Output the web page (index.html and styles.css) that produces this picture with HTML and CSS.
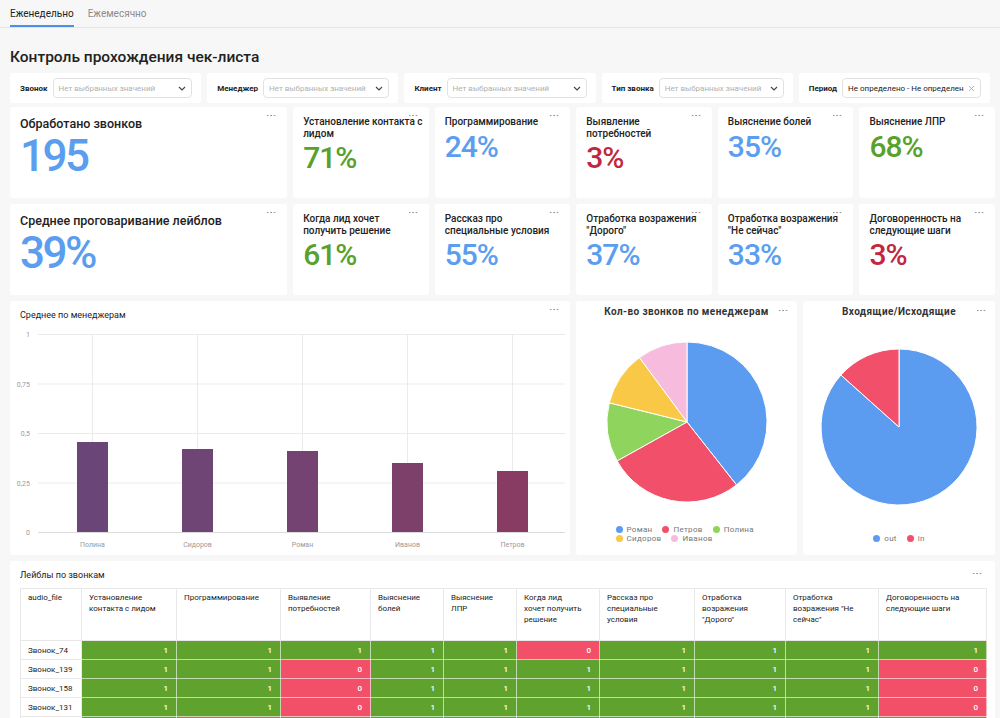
FILE: index.html
```html
<!DOCTYPE html>
<html>
  <head>
    <meta charset="utf-8">
    <title>Контроль прохождения чек-листа</title>
    <link rel="stylesheet" href="styles.css">
  </head>
  <body>
    <div class="tabs">
      <span class="tab tab-active">Еженедельно</span>
      <span class="tab">Ежемесячно</span>
    </div>

    <div class="page">
      <p class="page-title">Контроль прохождения чек-листа</p>

      <div class="filters">
        <div class="filter">
          <span class="filter-label">Звонок</span>
          <div class="select">
            <span class="placeholder">Нет выбранных значений</span>
            <svg class="chevron" width="8" height="5" viewBox="0 0 8 5"><path d="M1 1l3 3 3-3" fill="none" stroke="#444" stroke-width="1.1"/></svg>
          </div>
        </div>
        <div class="filter">
          <span class="filter-label">Менеджер</span>
          <div class="select">
            <span class="placeholder">Нет выбранных значений</span>
            <svg class="chevron" width="8" height="5" viewBox="0 0 8 5"><path d="M1 1l3 3 3-3" fill="none" stroke="#444" stroke-width="1.1"/></svg>
          </div>
        </div>
        <div class="filter">
          <span class="filter-label">Клиент</span>
          <div class="select">
            <span class="placeholder">Нет выбранных значений</span>
            <svg class="chevron" width="8" height="5" viewBox="0 0 8 5"><path d="M1 1l3 3 3-3" fill="none" stroke="#444" stroke-width="1.1"/></svg>
          </div>
        </div>
        <div class="filter">
          <span class="filter-label">Тип звонка</span>
          <div class="select">
            <span class="placeholder">Нет выбранных значений</span>
            <svg class="chevron" width="8" height="5" viewBox="0 0 8 5"><path d="M1 1l3 3 3-3" fill="none" stroke="#444" stroke-width="1.1"/></svg>
          </div>
        </div>
        <div class="filter">
          <span class="filter-label">Период</span>
          <div class="select">
            <span class="select-value">Не определено - Не определен</span>
            <svg class="clear" width="7" height="7" viewBox="0 0 7 7"><path d="M1 1l5 5M6 1l-5 5" stroke="#aaa" stroke-width="0.9"/></svg>
          </div>
        </div>
      </div>

      <div class="kpi-grid">
        <div class="card kpi kpi-wide">
          <span class="dots"></span>
          <p class="kpi-title-big">Обработано звонков</p>
          <p class="kpi-value-big blue">195</p>
        </div>
        <div class="card kpi">
          <span class="dots"></span>
          <p class="kpi-title">Установление контакта с лидом</p>
          <p class="kpi-value green">71%</p>
        </div>
        <div class="card kpi">
          <span class="dots"></span>
          <p class="kpi-title">Программирование</p>
          <p class="kpi-value blue">24%</p>
        </div>
        <div class="card kpi">
          <span class="dots"></span>
          <p class="kpi-title">Выявление потребностей</p>
          <p class="kpi-value red">3%</p>
        </div>
        <div class="card kpi">
          <span class="dots"></span>
          <p class="kpi-title">Выяснение болей</p>
          <p class="kpi-value blue">35%</p>
        </div>
        <div class="card kpi">
          <span class="dots"></span>
          <p class="kpi-title">Выяснение ЛПР</p>
          <p class="kpi-value green">68%</p>
        </div>

        <div class="card kpi kpi-wide">
          <span class="dots"></span>
          <p class="kpi-title-big">Среднее проговаривание лейблов</p>
          <p class="kpi-value-big blue">39%</p>
        </div>
        <div class="card kpi">
          <span class="dots"></span>
          <p class="kpi-title">Когда лид хочет получить решение</p>
          <p class="kpi-value green">61%</p>
        </div>
        <div class="card kpi">
          <span class="dots"></span>
          <p class="kpi-title">Рассказ про специальные условия</p>
          <p class="kpi-value blue">55%</p>
        </div>
        <div class="card kpi">
          <span class="dots"></span>
          <p class="kpi-title">Отработка возражения "Дорого"</p>
          <p class="kpi-value blue">37%</p>
        </div>
        <div class="card kpi">
          <span class="dots"></span>
          <p class="kpi-title">Отработка возражения "Не сейчас"</p>
          <p class="kpi-value blue">33%</p>
        </div>
        <div class="card kpi">
          <span class="dots"></span>
          <p class="kpi-title">Договоренность на следующие шаги</p>
          <p class="kpi-value red">3%</p>
        </div>
      </div>

      <div class="charts">
        <div class="card chart-card">
          <span class="dots"></span>
          <p class="chart-title">Среднее по менеджерам</p>
          <svg class="bar-chart" width="560" height="228" viewBox="0 0 560 228">
            <g stroke="#ebebeb" stroke-width="1">
              <line x1="28" y1="7.5" x2="555" y2="7.5"/>
              <line x1="28" y1="57" x2="555" y2="57"/>
              <line x1="28" y1="106.5" x2="555" y2="106.5"/>
              <line x1="28" y1="156" x2="555" y2="156"/>
              <line x1="82.5" y1="7" x2="82.5" y2="205"/>
              <line x1="187.5" y1="7" x2="187.5" y2="205"/>
              <line x1="292.5" y1="7" x2="292.5" y2="205"/>
              <line x1="397.5" y1="7" x2="397.5" y2="205"/>
              <line x1="502.5" y1="7" x2="502.5" y2="205"/>
            </g>
            <rect x="67" y="115" width="31" height="90" fill="#6a4678"/>
            <rect x="172" y="122" width="31" height="83" fill="#6e4575"/>
            <rect x="277" y="124" width="31" height="81" fill="#744371"/>
            <rect x="382" y="136" width="31" height="69" fill="#7d406a"/>
            <rect x="487" y="144" width="31" height="61" fill="#883c63"/>
            <line x1="28" y1="205.5" x2="555" y2="205.5" stroke="#dcdcdc"/>
            <g class="axis-text" text-anchor="end">
              <text x="20" y="10">1</text>
              <text x="20" y="59.5">0,75</text>
              <text x="20" y="109">0,5</text>
              <text x="20" y="158.5">0,25</text>
              <text x="20" y="208">0</text>
            </g>
            <g class="axis-text" text-anchor="middle">
              <text x="82.5" y="220">Полина</text>
              <text x="187.5" y="220">Сидоров</text>
              <text x="292.5" y="220">Роман</text>
              <text x="397.5" y="220">Иванов</text>
              <text x="502.5" y="220">Петров</text>
            </g>
          </svg>
        </div>

        <div class="card pie-card">
          <span class="dots"></span>
          <p class="pie-title">Кол-во звонков по менеджерам</p>
          <div class="pie-area">
            <svg width="162" height="162" viewBox="-81 -81 162 162">
              <g stroke="#fff" stroke-width="1" stroke-linejoin="round">
                <path d="M0,0 L0,-80 A80,80 0 0 1 49.5,62.9 Z" fill="#5b9cf0"/>
                <path d="M0,0 L49.5,62.9 A80,80 0 0 1 -69.9,38.9 Z" fill="#f2506a"/>
                <path d="M0,0 L-69.9,38.9 A80,80 0 0 1 -77.7,-19.2 Z" fill="#8fd45c"/>
                <path d="M0,0 L-77.7,-19.2 A80,80 0 0 1 -47.5,-64.4 Z" fill="#f9c846"/>
                <path d="M0,0 L-47.5,-64.4 A80,80 0 0 1 0,-80 Z" fill="#f7bbdd"/>
              </g>
            </svg>
          </div>
          <div class="legend legend-wrap">
            <span class="legend-item"><i class="dot" style="background: #5b9cf0;"></i>Роман</span>
            <span class="legend-item"><i class="dot" style="background: #f2506a;"></i>Петров</span>
            <span class="legend-item"><i class="dot" style="background: #8fd45c;"></i>Полина</span>
            <span class="legend-item"><i class="dot" style="background: #f9c846;"></i>Сидоров</span>
            <span class="legend-item"><i class="dot" style="background: #f7bbdd;"></i>Иванов</span>
          </div>
        </div>

        <div class="card pie-card">
          <span class="dots"></span>
          <p class="pie-title">Входящие/Исходящие</p>
          <div class="pie-area">
            <svg width="158" height="158" viewBox="-79 -79 158 158">
              <g stroke="#fff" stroke-width="1" stroke-linejoin="round">
                <path d="M0,0 L0,-78 A78,78 0 1 1 -58.1,-52 Z" fill="#5b9cf0"/>
                <path d="M0,0 L-58.1,-52 A78,78 0 0 1 0,-78 Z" fill="#f2506a"/>
              </g>
            </svg>
          </div>
          <div class="legend">
            <span class="legend-item"><i class="dot" style="background: #5b9cf0;"></i>out</span>
            <span class="legend-item"><i class="dot" style="background: #f2506a;"></i>in</span>
          </div>
        </div>
      </div>

      <div class="card table-card">
        <span class="dots"></span>
        <p class="table-title">Лейблы по звонкам</p>
        <table class="labels-table">
          <colgroup>
            <col style="width: 61px;">
            <col style="width: 95px;">
            <col style="width: 104px;">
            <col style="width: 90px;">
            <col style="width: 73px;">
            <col style="width: 73px;">
            <col style="width: 83px;">
            <col style="width: 95px;">
            <col style="width: 91px;">
            <col style="width: 93px;">
            <col style="width: 108px;">
          </colgroup>
          <thead>
            <tr>
              <th>audio_file</th>
              <th>Установление контакта с лидом</th>
              <th>Программирование</th>
              <th>Выявление потребностей</th>
              <th>Выяснение болей</th>
              <th>Выяснение ЛПР</th>
              <th>Когда лид хочет получить решение</th>
              <th>Рассказ про специальные условия</th>
              <th>Отработка возражения "Дорого"</th>
              <th>Отработка возражения "Не сейчас"</th>
              <th>Договоренность на следующие шаги</th>
            </tr>
          </thead>
          <tbody class="js-rows"></tbody>
        </table>
      </div>
    </div>

    <script>
      const rows = [
        ['Звонок_74', [1, 1, 1, 1, 1, 0, 1, 1, 1, 1]],
        ['Звонок_139', [1, 1, 0, 1, 1, 1, 1, 1, 1, 0]],
        ['Звонок_158', [1, 1, 0, 1, 1, 1, 1, 1, 1, 0]],
        ['Звонок_131', [1, 1, 0, 1, 1, 1, 1, 1, 1, 0]],
        ['', [1, 0, 1, 1, 1, 1, 1, 1, 1, 1]]
      ];

      let rowsHTML = '';

      rows.forEach((row) => {
        let cells = `<td class="name-cell">${row[0]}</td>`;
        row[1].forEach((value) => {
          const cellClass = value === 1 ? 'cell-yes' : 'cell-no';
          // the last row is only a sliver at the bottom edge
          const text = row[0] ? value : '';
          cells += `<td class="${cellClass}">${text}</td>`;
        });
        rowsHTML += `<tr>${cells}</tr>`;
      });

      document.querySelector('.js-rows').innerHTML = rowsHTML;
    </script>
  </body>
</html>
```

FILE: styles.css
```css
body {
  margin: 0;
  background-color: #f7f7f7;
  color: #222;
  font-family: Roboto, "Noto Sans", sans-serif;
}

p {
  margin: 0;
}

.tabs {
  display: flex;
  gap: 14px;
  height: 27px;
  padding-left: 10px;
  border-bottom: 1px solid #e4e4e4;
}

.tab {
  font-size: 10px;
  line-height: 27px;
  color: #8c8c8c;
}

.tab-active {
  color: #222;
  box-shadow: inset 0 -2px 0 #4d8ee8;
}

.page {
  padding: 0 5px 0 10px;
}

.page-title {
  font-size: 15.5px;
  font-weight: 500;
  line-height: 20px;
  margin-top: 19px;
  margin-bottom: 6px;
}

.filters {
  display: flex;
  gap: 6px;
  margin-bottom: 4px;
  margin-right: 5px;
}

.filter {
  flex: 1;
  display: flex;
  align-items: center;
  height: 30px;
  padding: 0 9px 0 10px;
  background-color: white;
  border-radius: 3px;
}

.filter-label {
  font-size: 8px;
  font-weight: 700;
  margin-right: 5px;
  white-space: nowrap;
}

.select {
  flex: 1;
  display: flex;
  align-items: center;
  height: 18px;
  padding: 0 5px;
  border: 1px solid #e2e2e2;
  border-radius: 4px;
  font-size: 8px;
  overflow: hidden;
  white-space: nowrap;
}

.placeholder {
  flex: 1;
  color: #b0b0b0;
}

.select-value {
  flex: 1;
  overflow: hidden;
  color: #222;
}

.chevron {
  margin-left: 4px;
}

.clear {
  margin-left: 4px;
  flex-shrink: 0;
}

.card {
  position: relative;
  background-color: white;
  border-radius: 3px;
}

.dots {
  position: absolute;
  top: 7px;
  right: 11px;
  width: 10px;
  height: 3px;
  background-image: radial-gradient(circle, #9a9a9a 0.7px, transparent 1.1px);
  background-size: 3.4px 3px;
}

.kpi-grid {
  display: grid;
  grid-template-columns: repeat(7, 1fr);
  grid-auto-rows: 91px;
  gap: 6px;
}

.kpi {
  padding: 9px 5px 9px 10px;
}

.kpi-wide {
  grid-column: span 2;
  padding-top: 9px;
}

.kpi-title-big {
  font-size: 12.5px;
  font-weight: 500;
  line-height: 15px;
}

.kpi-value-big {
  font-size: 44px;
  font-weight: 500;
  line-height: 46px;
  letter-spacing: -2.5px;
  margin-top: 2px;
}

.kpi-title {
  font-size: 10px;
  font-weight: 500;
  line-height: 11.5px;
}

.kpi-value {
  font-size: 30px;
  font-weight: 500;
  line-height: 30px;
  margin-top: 4px;
  letter-spacing: -1px;
}

.blue {
  color: #5b9ef0;
}

.green {
  color: #58a12b;
}

.red {
  color: #c1283f;
}

.charts {
  display: grid;
  grid-template-columns: 560px 221px 1fr;
  gap: 6px;
  margin-top: 6px;
  height: 254px;
}

.chart-card {
  padding-top: 8px;
}

.chart-title {
  font-size: 9px;
  line-height: 12px;
  padding-left: 10px;
  height: 18px;
}

.bar-chart {
  display: block;
}

.axis-text {
  font-size: 7px;
  fill: #9a9a9a;
}

.pie-card {
  display: flex;
  flex-direction: column;
  padding: 4px 0 12px;
}

.pie-card .dots {
  top: 8px;
  right: 9px;
}

.pie-title {
  font-size: 10px;
  font-weight: 700;
  line-height: 14px;
  text-align: center;
  letter-spacing: 0.4px;
  color: #333;
}

.pie-area {
  flex: 1;
  display: flex;
  align-items: center;
  justify-content: center;
}

.legend {
  display: flex;
  justify-content: center;
  gap: 0 10px;
  font-size: 8px;
  line-height: 9px;
  color: #777;
  letter-spacing: 0.3px;
}

.legend-wrap {
  flex-wrap: wrap;
  justify-content: flex-start;
  width: 142px;
  margin: 0 auto;
}

.legend-item {
  display: flex;
  align-items: center;
}

.dot {
  width: 7px;
  height: 7px;
  border-radius: 50%;
  margin-right: 4px;
}

.table-card {
  margin-top: 6px;
  padding: 8px 9px 0 10px;
  height: 160px;
  overflow: hidden;
}

.table-card .dots {
  top: 11px;
  right: 13px;
}

.table-title {
  font-size: 9px;
  line-height: 12px;
  height: 19px;
}

.labels-table {
  border-collapse: collapse;
  table-layout: fixed;
  width: 966px;
  font-size: 8px;
}

.labels-table th {
  height: 52px;
  padding: 3px 16px 0 7px;
  vertical-align: top;
  text-align: left;
  font-weight: 400;
  line-height: 11px;
  color: #222;
  border: 1px solid #e8e8e8;
  box-sizing: border-box;
}

.labels-table td {
  height: 19px;
  padding: 0 8px;
  text-align: right;
  color: white;
  font-weight: 500;
  border: 1px solid rgba(255, 255, 255, 0.6);
  box-sizing: border-box;
}

.labels-table .name-cell {
  text-align: left;
  color: #222;
  font-weight: 400;
  border: 1px solid #e8e8e8;
  padding-left: 7px;
}

.cell-yes {
  background-color: #5fa22d;
}

.cell-no {
  background-color: #f24f69;
}
```
